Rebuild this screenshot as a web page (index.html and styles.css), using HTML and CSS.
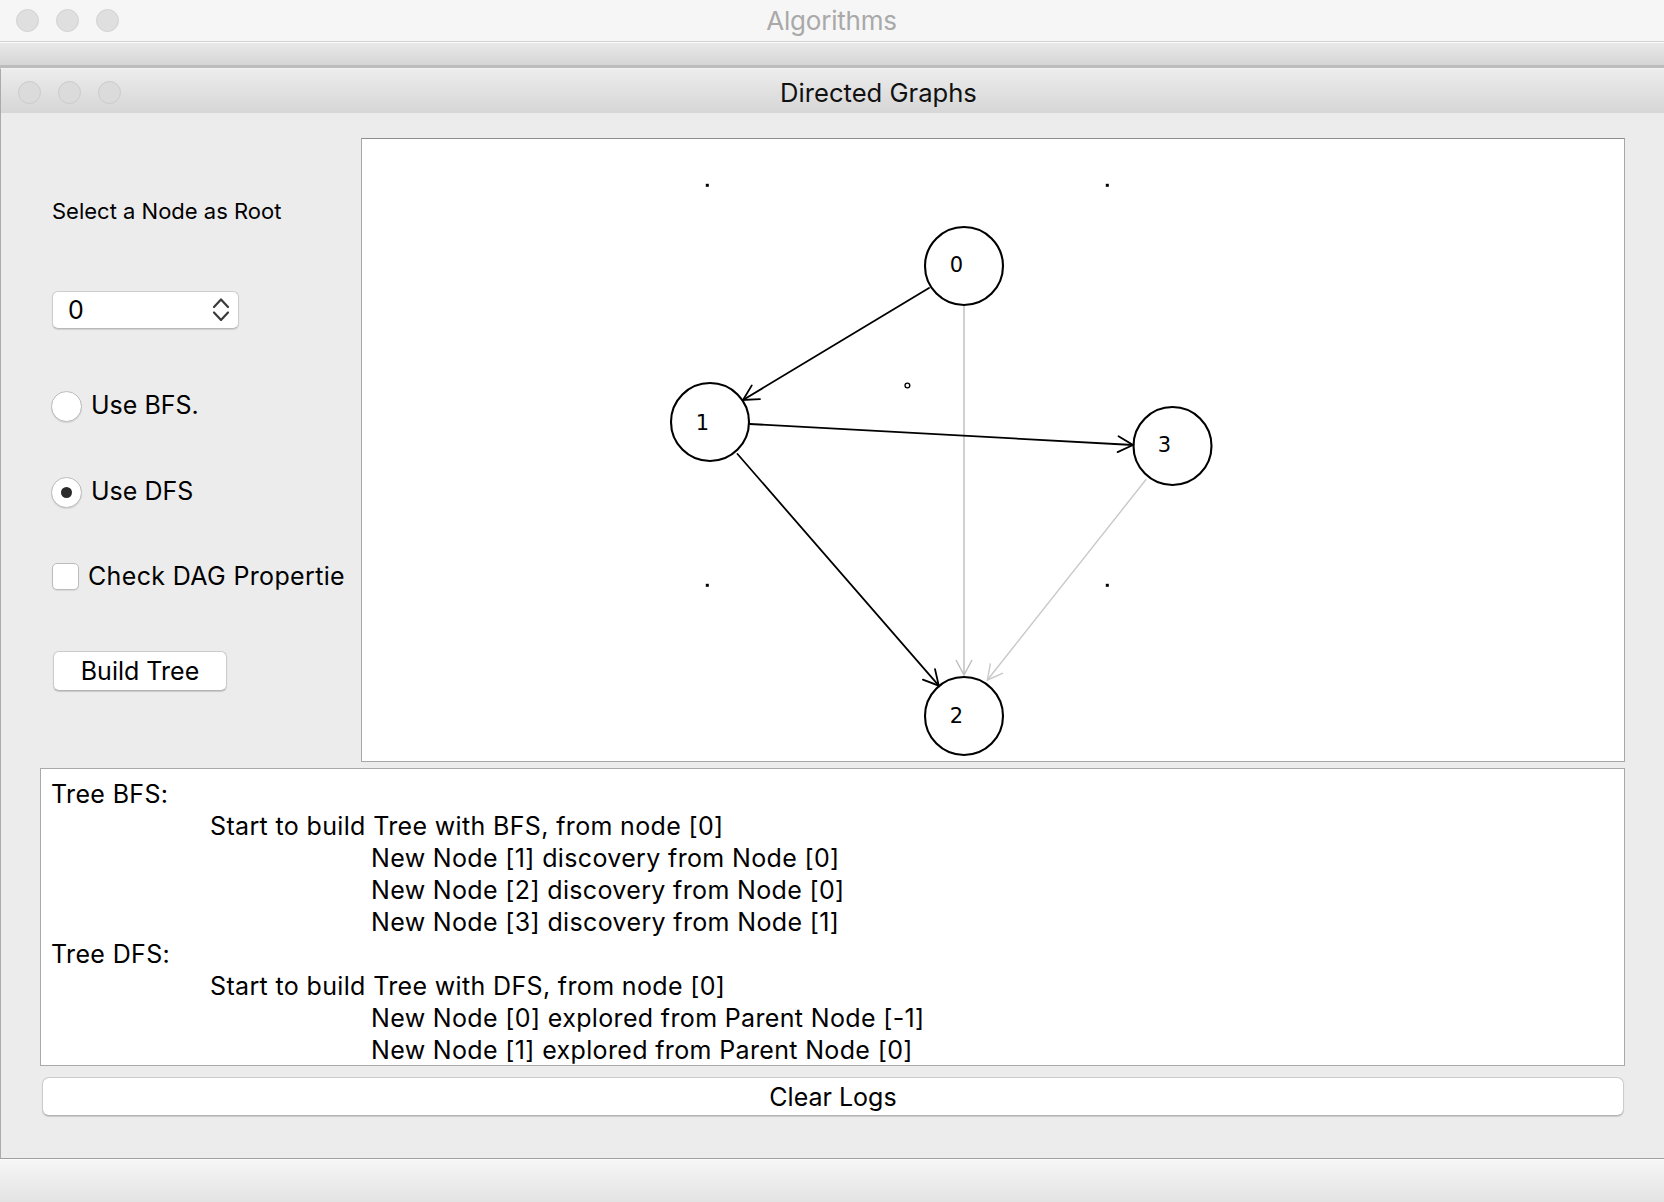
FILE: index.html
```html
<!DOCTYPE html>
<html lang="en">
<head>
<meta charset="utf-8">
<title>Algorithms</title>
<link rel="stylesheet" href="styles.css">
</head>
<body>
<div class="desktop">
  <header class="app-titlebar">
    <div class="lights">
      <span class="light"></span><span class="light"></span><span class="light"></span>
    </div>
    <span class="app-title">Algorithms</span>
  </header>
  <div class="toolbar"></div>

  <section class="window">
    <div class="win-titlebar">
      <div class="lights lights-inner">
        <span class="light"></span><span class="light"></span><span class="light"></span>
      </div>
      <span class="win-title">Directed Graphs</span>
    </div>

    <div class="win-body">
      <div class="top-row">
        <aside class="controls">
          <div class="ctl-label">Select a Node as Root</div>
          <div class="spinner">
            <span class="spinner-value">0</span>
            <svg class="spinner-arrows" width="18" height="26" viewBox="0 0 18 26">
              <polyline points="2,10 9,2.5 16,10" fill="none" stroke="#3a3a3a" stroke-width="2.2" stroke-linecap="round" stroke-linejoin="round"/>
              <polyline points="2,15.5 9,23 16,15.5" fill="none" stroke="#3a3a3a" stroke-width="2.2" stroke-linecap="round" stroke-linejoin="round"/>
            </svg>
          </div>
          <label class="opt opt-bfs"><span class="radio"></span><span class="opt-text">Use BFS.</span></label>
          <label class="opt opt-dfs"><span class="radio checked"><span class="radio-dot"></span></span><span class="opt-text">Use DFS</span></label>
          <label class="opt opt-check"><span class="checkbox"></span><span class="opt-text">Check DAG Propertie</span></label>
          <button class="btn build">Build Tree</button>
        </aside>

        <div class="canvas">
          <svg class="graph" width="1262" height="622" viewBox="362 139 1262 622">
            <g fill="#000">
              <rect x="705.8" y="183.8" width="3" height="3"/>
              <rect x="1105.8" y="183.8" width="3" height="3"/>
              <rect x="705.8" y="583.8" width="3" height="3"/>
              <rect x="1105.8" y="583.8" width="3" height="3"/>
            </g>
            <circle cx="907.4" cy="385.5" r="2.4" fill="none" stroke="#000" stroke-width="1.3"/>

            <g stroke="#bdbdbd" stroke-width="1.4" fill="none">
              <line x1="964" y1="306" x2="964" y2="675"/>
              <polyline points="956,660 964,675 972,660"/>
            </g>
            <g stroke="#c8c8c8" stroke-width="1.4" fill="none">
              <line x1="1146.2" y1="479.3" x2="987.4" y2="680"/>
              <polyline points="990.4,663.3 987.4,680 1003,673.2"/>
            </g>

            <g stroke="#000" stroke-width="1.8" fill="none" stroke-linecap="round">
              <line x1="929" y1="288" x2="743" y2="400"/>
              <polyline points="751.8,385.4 743,400 760,399.1"/>
              <line x1="750" y1="424" x2="1133" y2="445"/>
              <polyline points="1118.5,436.2 1133,445 1117.6,452.1"/>
              <line x1="737.5" y1="454" x2="938.8" y2="685.7"/>
              <polyline points="935,669.1 938.8,685.7 922.9,679.6"/>
            </g>

            <g stroke="#000" stroke-width="2.1" fill="none">
              <circle cx="964" cy="266" r="39"/>
              <circle cx="710" cy="422" r="39"/>
              <circle cx="1172.5" cy="446" r="39"/>
              <circle cx="964" cy="716" r="39"/>
            </g>
            <g class="node-label" text-anchor="middle">
              <text x="956.5" y="272">0</text>
              <text x="702.5" y="429.5">1</text>
              <text x="1164.5" y="451.5">3</text>
              <text x="956.5" y="722.5">2</text>
            </g>
          </svg>
        </div>
      </div>

      <div class="log">
        <div class="log-line">Tree BFS:</div>
        <div class="log-line ind1">Start to build Tree with BFS, from node [0]</div>
        <div class="log-line ind2">New Node [1] discovery from Node [0]</div>
        <div class="log-line ind2">New Node [2] discovery from Node [0]</div>
        <div class="log-line ind2">New Node [3] discovery from Node [1]</div>
        <div class="log-line">Tree DFS:</div>
        <div class="log-line ind1">Start to build Tree with DFS, from node [0]</div>
        <div class="log-line ind2">New Node [0] explored from Parent Node [-1]</div>
        <div class="log-line ind2">New Node [1] explored from Parent Node [0]</div>
      </div>

      <button class="btn clear">Clear Logs</button>
    </div>
  </section>

  <footer class="bottombar"></footer>
</div>
</body>
</html>
```

FILE: styles.css
```css
* { box-sizing: border-box; }

html, body {
  margin: 0;
  padding: 0;
  width: 1664px;
  height: 1202px;
  overflow: hidden;
  background: #ececec;
  font-family: "Inter", "Liberation Sans", sans-serif;
  color: #000;
}

.desktop {
  display: flex;
  flex-direction: column;
  width: 1664px;
  height: 1202px;
}

/* ---------- outer app title bar ---------- */
.app-titlebar {
  height: 42px;
  display: flex;
  align-items: center;
  background: #f6f6f6;
  border-bottom: 1px solid #d3d3d3;
  padding-left: 16px;
}

.lights {
  display: flex;
  gap: 17px;
  flex: none;
}

.light {
  width: 23px;
  height: 23px;
  border-radius: 50%;
  background: #dfdfdf;
  border: 1px solid #d2d2d2;
}

.app-title {
  flex: 1;
  text-align: center;
  padding-right: 120px;
  font-size: 26px;
  color: #a9a9a9;
  letter-spacing: -0.2px;
}

.toolbar {
  height: 26px;
  border-top: 1px solid #fbfbfb;
  background: linear-gradient(#e9e9e9, #d5d5d5);
  border-bottom: 3px solid #bcbcbc;
}

/* ---------- inner window ---------- */
.window {
  flex: 1;
  display: flex;
  flex-direction: column;
  border-left: 1px solid #ababab;
  border-top: 1px solid #f3f3f3;
  border-bottom: 1px solid #9f9f9f;
  background: #ececec;
}

.win-titlebar {
  height: 44px;
  display: flex;
  align-items: center;
  padding-left: 17px;
  padding-top: 2px;
  background: linear-gradient(#ececec, #d6d6d6);
}

.lights-inner .light {
  background: #dbdbdb;
  border-color: #cbcbcb;
}

.win-title {
  flex: 1;
  text-align: center;
  padding-right: 28px;
  font-size: 25.6px;
  color: #111;
}

.win-body {
  padding: 25px 39px 42px 39px;
  display: flex;
  flex-direction: column;
}

.top-row {
  display: flex;
  height: 624px;
}

/* ---------- controls ---------- */
.controls {
  width: 321px;
  flex: none;
  display: flex;
  flex-direction: column;
  align-items: flex-start;
  padding-top: 59px;
  padding-left: 12px;
}

.ctl-label {
  height: 28px;
  line-height: 28px;
  font-size: 22px;
  white-space: nowrap;
}

.spinner {
  margin-top: 66px;
  width: 187px;
  height: 38px;
  background: #fff;
  border: 1px solid #cdcdcd;
  border-bottom-color: #b9b9b9;
  border-radius: 6px;
  box-shadow: 0 1px 1px rgba(0, 0, 0, 0.12);
  display: flex;
  align-items: center;
  justify-content: space-between;
  padding: 0 8px 0 15px;
}

.spinner-value {
  font-size: 25px;
  line-height: 1;
}

.spinner-arrows { display: block; }

.opt {
  display: flex;
  align-items: center;
  height: 32px;
  gap: 9px;
  font-size: 25px;
  white-space: nowrap;
}

.opt-bfs { margin-top: 61px; margin-left: -1px; }
.opt-dfs { margin-top: 54px; margin-left: -1px; }
.opt-check { margin-top: 52px; gap: 9px; letter-spacing: 0.35px; }

.opt-text {
  line-height: 32px;
  padding-bottom: 3px;
}

.opt-check .opt-text { padding-bottom: 0; }

.radio {
  width: 31px;
  height: 31px;
  border-radius: 50%;
  background: #fff;
  border: 1px solid #bcbcbc;
  box-shadow: 0 1px 1px rgba(0, 0, 0, 0.1);
  display: flex;
  align-items: center;
  justify-content: center;
  flex: none;
}

.radio-dot {
  width: 11px;
  height: 11px;
  border-radius: 50%;
  background: #2a2a2a;
}

.checkbox {
  width: 27px;
  height: 27px;
  border-radius: 5px;
  background: #fff;
  border: 1px solid #bcbcbc;
  box-shadow: 0 1px 1px rgba(0, 0, 0, 0.08);
  flex: none;
}

.btn {
  font-family: "Inter", "Liberation Sans", sans-serif;
  background: #fff;
  border: 1px solid #cbcbcb;
  border-bottom-color: #b3b3b3;
  border-radius: 6px;
  box-shadow: 0 1px 1px rgba(0, 0, 0, 0.15);
  color: #000;
  font-size: 25px;
  padding: 0;
  cursor: default;
}

.build {
  margin-top: 59px;
  margin-left: 1px;
  width: 174px;
  height: 40px;
}

/* ---------- canvas ---------- */
.canvas {
  flex: 1;
  background: #fff;
  border: 1px solid #a7a7a7;
  border-top-color: #8e8e8e;
}

.graph { display: block; }

.node-label text {
  font-family: "DejaVu Sans", sans-serif;
  font-size: 21px;
  fill: #000;
}

/* ---------- log ---------- */
.log {
  margin-top: 6px;
  height: 298px;
  background: #fff;
  border: 1px solid #a9a9a9;
  overflow: hidden;
  padding: 9px 0 0 10px;
  font-size: 25px;
  line-height: 32px;
  letter-spacing: 0.35px;
}

.log-line { white-space: nowrap; }
.ind1 { padding-left: 159px; }
.ind2 { padding-left: 320px; }

.clear {
  margin: 11px 1px 0 2px;
  height: 39px;
  display: block;
  width: calc(100% - 3px);
  border-radius: 7px;
}

/* ---------- bottom bar ---------- */
.bottombar {
  height: 43px;
  border-top: 1px solid #fbfbfb;
  background: linear-gradient(#f6f6f6, #e3e3e3);
}
```
